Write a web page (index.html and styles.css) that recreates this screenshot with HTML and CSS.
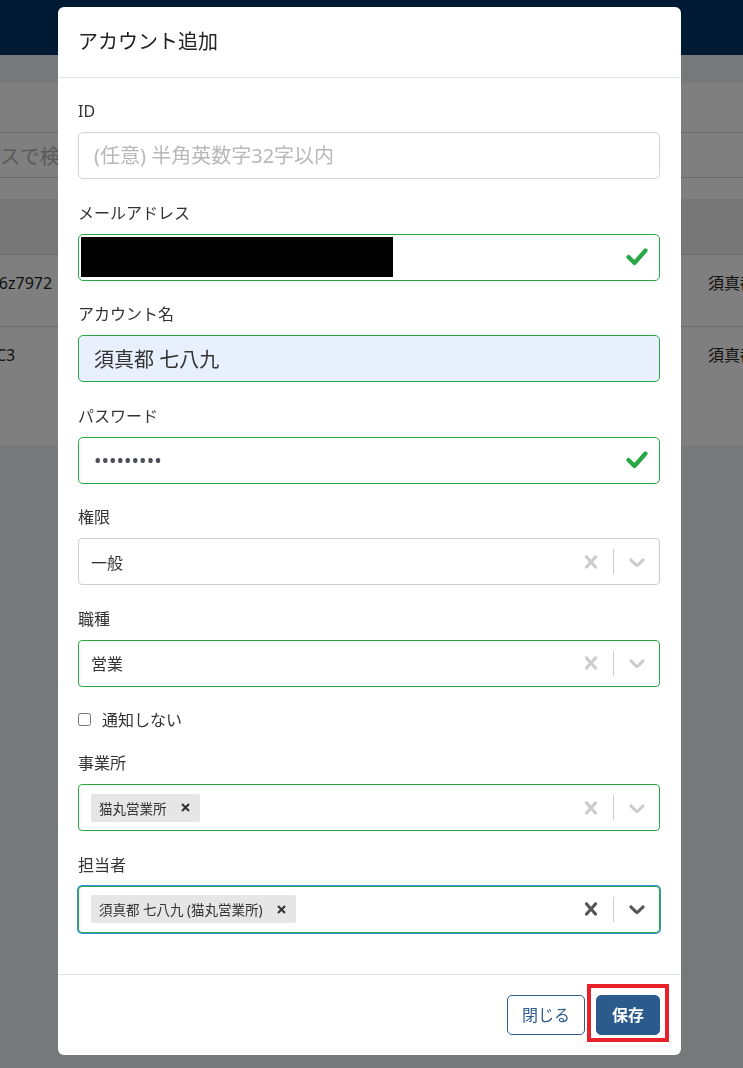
FILE: index.html
```html
<!DOCTYPE html>
<html lang="ja">
<head>
<meta charset="utf-8">
<title>アカウント追加</title>
<link rel="stylesheet" href="styles.css">
</head>
<body>
<div class="page">
  <header class="navbar"></header>
  <div class="subbar"></div>
  <main class="content">
    <div class="search">メールアドレスで検索</div>
    <div class="table">
      <div class="thead"></div>
      <div class="row"><span class="cell-id">q6z7972</span><span class="cell-name">須真都 七八九</span></div>
      <div class="row"><span class="cell-id2">AC3</span><span class="cell-name">須真都 七八九</span></div>
    </div>
  </main>
</div>

<div class="backdrop"></div>

<div class="modal">
  <div class="modal-header">
    <h5 class="modal-title">アカウント追加</h5>
  </div>
  <div class="modal-body">
    <div class="group">
      <label class="label">ID</label>
      <input class="input" type="text" placeholder="(任意) 半角英数字32字以内">
    </div>
    <div class="group">
      <label class="label">メールアドレス</label>
      <div class="field">
        <span class="redact"></span>
        <svg class="check" width="22" height="18" viewBox="0 0 22 18"><polyline points="2.5,9 8.5,15 19.5,2.5" fill="none" stroke="#28a745" stroke-width="4.2" stroke-linejoin="round" stroke-linecap="round"/></svg>
      </div>
    </div>
    <div class="group">
      <label class="label">アカウント名</label>
      <input class="input valid autofill" type="text" value="須真都 七八九">
    </div>
    <div class="group">
      <label class="label">パスワード</label>
      <div class="field">
        <input class="field-input" type="password" value="123456789">
        <svg class="check" width="22" height="18" viewBox="0 0 22 18"><polyline points="2.5,9 8.5,15 19.5,2.5" fill="none" stroke="#28a745" stroke-width="4.2" stroke-linejoin="round" stroke-linecap="round"/></svg>
      </div>
    </div>
    <div class="group">
      <label class="label">権限</label>
      <div class="select">
        <div class="select-value">一般</div>
        <div class="select-ind"><svg width="26" height="26" viewBox="0 0 20 20"><path fill="#cccccc" d="M14.348 14.849c-0.469 0.469-1.229 0.469-1.697 0l-2.651-3.030-2.651 3.029c-0.469 0.469-1.229 0.469-1.697 0-0.469-0.469-0.469-1.229 0-1.697l2.758-3.15-2.759-3.152c-0.469-0.469-0.469-1.228 0-1.697s1.228-0.469 1.697 0l2.652 3.031 2.651-3.031c0.469-0.469 1.228-0.469 1.697 0s0.469 1.229 0 1.697l-2.758 3.152 2.758 3.15c0.469 0.469 0.469 1.229 0 1.698z"/></svg></div>
        <span class="select-sep"></span>
        <div class="select-ind"><svg width="26" height="26" viewBox="0 0 20 20"><path fill="#cccccc" d="M4.516 7.548c0.436-0.446 1.043-0.481 1.576 0l3.908 3.747 3.908-3.747c0.533-0.481 1.141-0.446 1.574 0 0.436 0.445 0.408 1.197 0 1.615-0.406 0.418-4.695 4.502-4.695 4.502-0.217 0.223-0.502 0.335-0.787 0.335s-0.57-0.112-0.789-0.335c0 0-4.287-4.084-4.695-4.502s-0.436-1.17 0-1.615z"/></svg></div>
      </div>
    </div>
    <div class="group">
      <label class="label">職種</label>
      <div class="select valid">
        <div class="select-value">営業</div>
        <div class="select-ind"><svg width="26" height="26" viewBox="0 0 20 20"><path fill="#cccccc" d="M14.348 14.849c-0.469 0.469-1.229 0.469-1.697 0l-2.651-3.030-2.651 3.029c-0.469 0.469-1.229 0.469-1.697 0-0.469-0.469-0.469-1.229 0-1.697l2.758-3.15-2.759-3.152c-0.469-0.469-0.469-1.228 0-1.697s1.228-0.469 1.697 0l2.652 3.031 2.651-3.031c0.469-0.469 1.228-0.469 1.697 0s0.469 1.229 0 1.697l-2.758 3.152 2.758 3.15c0.469 0.469 0.469 1.229 0 1.698z"/></svg></div>
        <span class="select-sep"></span>
        <div class="select-ind"><svg width="26" height="26" viewBox="0 0 20 20"><path fill="#cccccc" d="M4.516 7.548c0.436-0.446 1.043-0.481 1.576 0l3.908 3.747 3.908-3.747c0.533-0.481 1.141-0.446 1.574 0 0.436 0.445 0.408 1.197 0 1.615-0.406 0.418-4.695 4.502-4.695 4.502-0.217 0.223-0.502 0.335-0.787 0.335s-0.57-0.112-0.789-0.335c0 0-4.287-4.084-4.695-4.502s-0.436-1.17 0-1.615z"/></svg></div>
      </div>
    </div>
    <label class="check-row"><input type="checkbox" class="checkbox"><span>通知しない</span></label>
    <div class="group">
      <label class="label">事業所</label>
      <div class="select valid">
        <div class="select-value"><span class="chip">猫丸営業所<svg class="chip-x" width="9" height="9" viewBox="0 0 9 9"><path d="M1 1L8 8M8 1L1 8" stroke="#333" stroke-width="2.1"/></svg></span></div>
        <div class="select-ind"><svg width="26" height="26" viewBox="0 0 20 20"><path fill="#cccccc" d="M14.348 14.849c-0.469 0.469-1.229 0.469-1.697 0l-2.651-3.030-2.651 3.029c-0.469 0.469-1.229 0.469-1.697 0-0.469-0.469-0.469-1.229 0-1.697l2.758-3.15-2.759-3.152c-0.469-0.469-0.469-1.228 0-1.697s1.228-0.469 1.697 0l2.652 3.031 2.651-3.031c0.469-0.469 1.228-0.469 1.697 0s0.469 1.229 0 1.697l-2.758 3.152 2.758 3.15c0.469 0.469 0.469 1.229 0 1.698z"/></svg></div>
        <span class="select-sep"></span>
        <div class="select-ind"><svg width="26" height="26" viewBox="0 0 20 20"><path fill="#cccccc" d="M4.516 7.548c0.436-0.446 1.043-0.481 1.576 0l3.908 3.747 3.908-3.747c0.533-0.481 1.141-0.446 1.574 0 0.436 0.445 0.408 1.197 0 1.615-0.406 0.418-4.695 4.502-4.695 4.502-0.217 0.223-0.502 0.335-0.787 0.335s-0.57-0.112-0.789-0.335c0 0-4.287-4.084-4.695-4.502s-0.436-1.17 0-1.615z"/></svg></div>
      </div>
    </div>
    <div class="group last">
      <label class="label">担当者</label>
      <div class="select valid focused">
        <div class="select-value"><span class="chip">須真都 七八九 (猫丸営業所)<svg class="chip-x" width="9" height="9" viewBox="0 0 9 9"><path d="M1 1L8 8M8 1L1 8" stroke="#333" stroke-width="2.1"/></svg></span></div>
        <div class="select-ind"><svg width="26" height="26" viewBox="0 0 20 20"><path fill="#555555" d="M14.348 14.849c-0.469 0.469-1.229 0.469-1.697 0l-2.651-3.030-2.651 3.029c-0.469 0.469-1.229 0.469-1.697 0-0.469-0.469-0.469-1.229 0-1.697l2.758-3.15-2.759-3.152c-0.469-0.469-0.469-1.228 0-1.697s1.228-0.469 1.697 0l2.652 3.031 2.651-3.031c0.469-0.469 1.228-0.469 1.697 0s0.469 1.229 0 1.697l-2.758 3.152 2.758 3.15c0.469 0.469 0.469 1.229 0 1.698z"/></svg></div>
        <span class="select-sep"></span>
        <div class="select-ind"><svg width="26" height="26" viewBox="0 0 20 20"><path fill="#555555" d="M4.516 7.548c0.436-0.446 1.043-0.481 1.576 0l3.908 3.747 3.908-3.747c0.533-0.481 1.141-0.446 1.574 0 0.436 0.445 0.408 1.197 0 1.615-0.406 0.418-4.695 4.502-4.695 4.502-0.217 0.223-0.502 0.335-0.787 0.335s-0.57-0.112-0.789-0.335c0 0-4.287-4.084-4.695-4.502s-0.436-1.17 0-1.615z"/></svg></div>
      </div>
    </div>
  </div>
  <div class="modal-footer">
    <button class="btn btn-outline" type="button">閉じる</button>
    <span class="highlight"><button class="btn btn-primary" type="button">保存</button></span>
  </div>
</div>
</body>
</html>
```

FILE: styles.css
```css
* { box-sizing: border-box; }
html, body { margin: 0; }
body {
  width: 743px;
  height: 1068px;
  overflow: hidden;
  background: #eff0f4;
  color: #212529;
  font-family: "Noto Sans", "Noto Sans CJK JP", sans-serif;
}

/* background page */
.navbar { height: 55px; background: #023466; }
.subbar { height: 28px; background: #eff0f4; }
.content {
  height: 363px;
  background: #ffffff;
  padding-top: 49px;
  overflow: hidden;
}
.search {
  display: flex;
  align-items: center;
  width: 1000px;
  height: 46px;
  margin-left: -137px;
  padding-left: 16px;
  border: 1px solid #d0d0d0;
  border-radius: 4px;
  font-size: 20px;
  color: #b4b4b4;
  white-space: nowrap;
}
.table { margin-top: 21px; }
.thead { height: 56px; background: #eeeeee; border-bottom: 1px solid #d6d6d6; }
.row {
  display: grid;
  grid-template-columns: 719px 200px;
  margin-left: -11px;
  height: 72px;
  padding-top: 16px;
  border-bottom: 1px solid #d6d6d6;
  font-size: 16px;
  line-height: 24px;
  color: #1e1e1e;
  white-space: nowrap;
}
.row:last-child { border-bottom: 0; }
.cell-id2 { margin-left: -3px; }

/* overlay */
.backdrop { position: fixed; inset: 0; background: rgba(0, 0, 0, 0.5); }
.modal {
  position: fixed;
  top: 7px;
  left: 58px;
  width: 623px;
  background: #ffffff;
  border-radius: 6px;
}
.modal-header {
  height: 71px;
  padding: 20px 20px 0;
  border-bottom: 1px solid #dee2e6;
}
.modal-title {
  margin: 0;
  font-size: 20px;
  font-weight: 400;
  line-height: 30px;
  color: #222;
}
.modal-body { padding: 22px 21px 41px 20px; }
.group { margin-bottom: 22.5px; }
.group.last { margin-bottom: 0; }
.label {
  display: block;
  margin-bottom: 10px;
  font-size: 16px;
  line-height: 22px;
  color: #333;
}
.input {
  display: block;
  width: 100%;
  height: 47px;
  padding: 0 15px;
  border: 1px solid #ced4da;
  border-radius: 5px;
  background: #fff;
  font-family: inherit;
  font-size: 20px;
  color: #333;
  outline: none;
}
.input::placeholder { color: #b8b8b8; }
.valid { border-color: #28a745; }
.autofill { background: #e8f0fe; }

.field {
  display: flex;
  align-items: center;
  height: 47px;
  padding: 0 11px 0 2px;
  border: 1px solid #28a745;
  border-radius: 5px;
}
.redact { width: 312px; height: 40px; background: #000; }
.check { margin-left: auto; flex: none; }
.field-input {
  flex: 1;
  height: 100%;
  padding: 0 0 0 13px;
  border: 0;
  background: transparent;
  font-family: inherit;
  font-size: 20px;
  color: #495057;
  outline: none;
}

.select {
  display: flex;
  align-items: center;
  height: 47px;
  border: 1px solid #cccccc;
  border-radius: 4px;
  background: #fff;
}
.select.valid { border-color: #28a745; }
.select.focused { box-shadow: 0 0 0 1px #3a8ee6; }
.select-value {
  flex: 1;
  display: flex;
  align-items: center;
  padding-left: 12px;
  font-size: 16px;
  color: #333;
}
.select-ind {
  width: 45px;
  display: flex;
  justify-content: center;
  align-items: center;
}
.select-sep { width: 1px; height: 25px; background: #cccccc; }

.chip {
  display: inline-flex;
  align-items: center;
  height: 28px;
  padding: 0 10px 0 8px;
  border-radius: 2px;
  background: #e6e6e6;
  font-size: 13.5px;
  color: #333;
  white-space: nowrap;
}
.chip-x { margin-left: 14px; }

.check-row {
  display: flex;
  align-items: center;
  height: 20px;
  margin-bottom: 23px;
  font-size: 16px;
  color: #333;
}
.checkbox { width: 13px; height: 13px; margin: 0 11px 0 0; }

.modal-footer {
  display: flex;
  justify-content: flex-end;
  gap: 11px;
  padding: 20px 21px 20px 20px;
  border-top: 1px solid #dee2e6;
}
.btn {
  height: 40px;
  padding: 0 14px;
  border-radius: 5px;
  font-family: inherit;
  font-size: 16px;
  line-height: 38px;
}
.btn-outline { border: 1px solid #2b5c8e; background: #fff; color: #2b5c8e; }
.btn-primary { border: 1px solid #2b5b8c; background: #2b5b8c; color: #fff; font-weight: 700; padding: 0 15px; }
.highlight { position: relative; display: inline-flex; }
.highlight::after {
  content: "";
  position: absolute;
  left: -9px;
  right: -9px;
  top: -11px;
  bottom: -7px;
  border: 4px solid #e8202a;
}
```
